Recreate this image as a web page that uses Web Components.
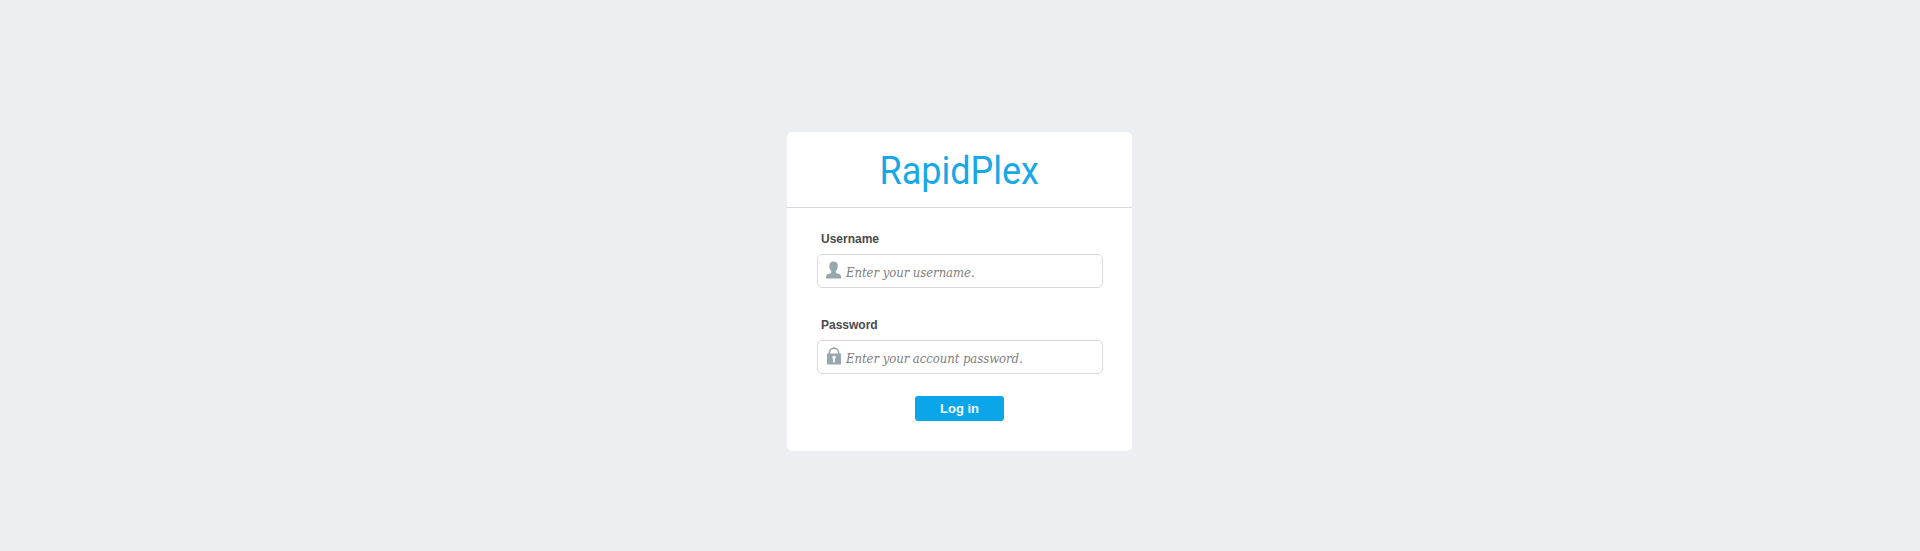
<!DOCTYPE html>
<html lang="en">
<head>
<meta charset="utf-8">
<title>RapidPlex</title>
<style>
html,body{margin:0;height:100%;background:#eceef1;overflow:hidden}
</style>
</head>
<body>
<login-page></login-page>
<script>
const define = (name, html, setup) => customElements.define(name, class extends HTMLElement {
  connectedCallback() {
    if (this.shadowRoot) return;
    this.attachShadow({ mode: 'open' }).innerHTML = html;
    if (setup) setup(this, this.shadowRoot);
  }
});

define('brand-logo', `
<style>
:host{display:block;width:160px;height:44px}
svg{display:block;overflow:visible}
text{font-family:Roboto,"Liberation Sans",sans-serif;font-size:39.5px;font-weight:400;fill:#18a8e6}
</style>
<svg width="160" height="44"><text x="-.5" y="33" textLength="159.500" lengthAdjust="spacingAndGlyphs">RapidPlex</text></svg>`);

define('field-icon', `
<style>:host{display:block;width:16px;height:18px;flex:none}svg{display:block;fill:#95a8ae}</style>
<svg width="16" height="18" viewBox="0 0 16 18"></svg>`, (host, root) => {
  root.querySelector('svg').innerHTML = host.getAttribute('name') === 'user'
    ? '<path d="M7.500 .5C10.400 .5 11.800 2.200 11.800 5C11.800 7.300 11.100 8.800 9.900 10V11.500C10.100 12.300 11.600 12.600 13.200 13.100C14.800 13.700 15.200 14.900 15.200 17.500H0C0 14.900 .4 13.700 2 13.100C3.600 12.600 5.100 12.300 5.300 11.500V10C4.100 8.800 3.300 7.300 3.300 5C3.300 2.200 4.700 .5 7.500 .5Z"/>'
    : '<path d="M3.400 7.500V5.700a4.600 4.600 0 0 1 9.200 0V7.500" fill="none" stroke="#95a8ae" stroke-width="1.600"/><path fill-rule="evenodd" d="M1 6.500H15V17.500H1ZM8 8.700A1.700 1.700 0 0 0 7 11.800V15.300H9V11.800A1.700 1.700 0 0 0 8 8.700Z"/>';
});

define('login-field', `
<style>
:host{display:block;font-family:"Liberation Sans",Arial,sans-serif}
label{display:block;height:14px;margin:0 0 8px 4px;font-size:12px;font-weight:700;line-height:14px;color:#4a4a4a}
.box{display:flex;align-items:center;box-sizing:border-box;height:34px;border:1px solid #d8dadc;border-radius:5px;padding:0 7px 0 8px;background:#fff}
field-icon{margin-top:-2px}
input{flex:1;min-width:0;height:25px;border:0;outline:0;padding:0;margin:3px 0 0 4px;background:transparent;color:#444;font:italic 13px "DejaVu Serif Condensed","DejaVu Serif",serif;font-stretch:condensed;letter-spacing:-.06px}
input::placeholder{color:#808080;opacity:1}
</style>
<label for="f"><slot></slot></label>
<div class="box"><field-icon></field-icon><input id="f"></div>`, (host, root) => {
  const input = root.querySelector('input');
  input.placeholder = host.getAttribute('hint');
  input.type = host.getAttribute('type');
  root.querySelector('field-icon').replaceWith(Object.assign(document.createElement('template'), {
    innerHTML: `<field-icon name="${host.getAttribute('icon')}"></field-icon>`
  }).content);
});

define('login-button', `
<style>
:host{display:block}
button{display:block;width:89px;height:25px;margin:0;border:0;border-radius:3px;padding:0;background:#0ba6e9;color:#f1fcff;font:700 13px/25px "Liberation Sans",Arial,sans-serif}
</style>
<button><slot></slot></button>`);

define('login-card', `
<style>
:host{display:block;width:345px;height:319px;border-radius:5px;background:#fff}
header{display:flex;justify-content:center;box-sizing:border-box;height:76px;padding-top:19px;border-bottom:1px solid #d9d9db}
main{display:flex;flex-direction:column;padding:24px 29px 0 30px}
</style>
<header><slot name="logo"></slot></header>
<main><slot></slot></main>`);

define('login-page', `
<style>
:host{display:flex;justify-content:center;align-items:flex-start;box-sizing:border-box;height:100%;padding:132px 1px 0 0}
login-field + login-field{margin-top:30px}
login-button{align-self:center;margin:22px 1px 0 0}
</style>
<login-card>
<brand-logo slot="logo"></brand-logo>
<login-field icon="user" type="text" hint="Enter your username.">Username</login-field>
<login-field icon="lock" type="password" hint="Enter your account password.">Password</login-field>
<login-button>Log in</login-button>
</login-card>`);
</script>
</body>
</html>
